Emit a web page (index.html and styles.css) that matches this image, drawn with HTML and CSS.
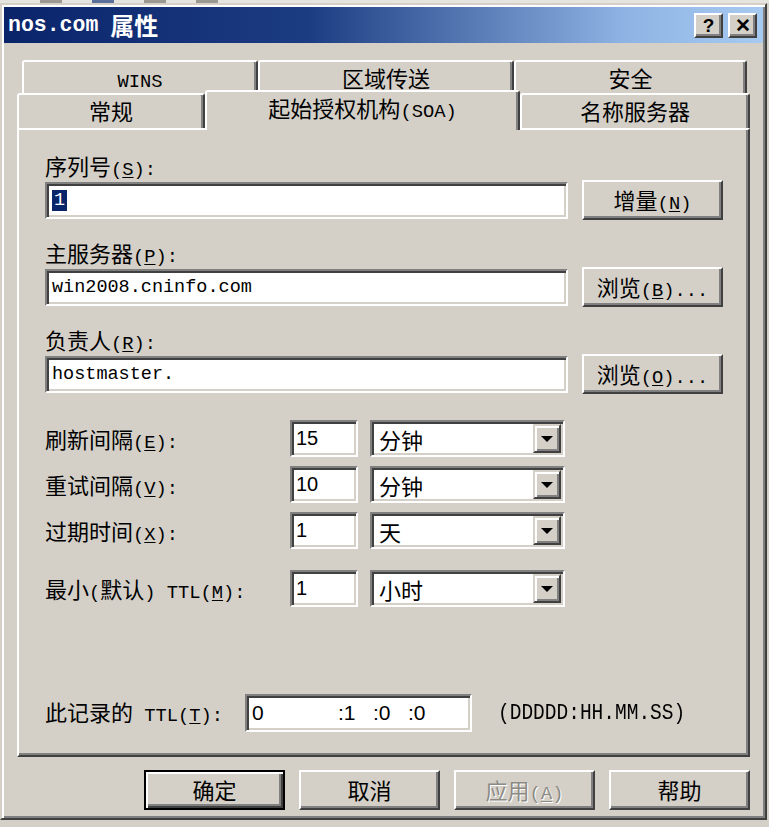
FILE: index.html
```html
<!DOCTYPE html>
<html lang="zh-CN">
<head>
  <meta charset="UTF-8" />
  <title>nos.com 属性</title>
  <link rel="stylesheet" href="styles.css">
</head>
<body>

<div class="desk-strip">
  <span class="frag"></span><span class="frag blue"></span><span class="frag"></span><span class="frag"></span>
</div>

<div class="window">
  <div class="titlebar">
    <div class="title"><span class="title-mono">nos.com</span><span class="title-cjk">属性</span></div>
    <div class="caption-btns">
      <span class="cap-btn">?</span>
      <span class="cap-btn">✕</span>
    </div>
  </div>

  <div class="tabs">
    <div class="tab-row back">
      <div class="tab w-wins"><span class="mono">WINS</span></div>
      <div class="tab w-zone">区域传送</div>
      <div class="tab w-sec">安全</div>
    </div>
    <div class="tab-row front">
      <div class="tab w-gen">常规</div>
      <div class="tab w-soa selected">起始授权机构<span class="key">(SOA)</span></div>
      <div class="tab w-ns">名称服务器</div>
    </div>
  </div>

  <div class="panel">
    <div class="field-label">序列号<span class="key">(<u>S</u>):</span></div>
    <div class="field-row">
      <div class="text-input wide"><span class="sel">1</span></div>
      <div class="btn">增量<span class="key">(<u>N</u>)</span></div>
    </div>

    <div class="field-label">主服务器<span class="key">(<u>P</u>):</span></div>
    <div class="field-row">
      <div class="text-input wide">win2008.cninfo.com</div>
      <div class="btn">浏览<span class="key">(<u>B</u>)...</span></div>
    </div>

    <div class="field-label">负责人<span class="key">(<u>R</u>):</span></div>
    <div class="field-row">
      <div class="text-input wide">hostmaster.</div>
      <div class="btn">浏览<span class="key">(<u>O</u>)...</span></div>
    </div>

    <div class="time-grid">
      <div class="time-label">刷新间隔<span class="key">(<u>E</u>):</span></div>
      <div class="text-input num">15</div>
      <div class="combo"><span class="combo-text">分钟</span><span class="combo-btn"></span></div>

      <div class="time-label">重试间隔<span class="key">(<u>V</u>):</span></div>
      <div class="text-input num">10</div>
      <div class="combo"><span class="combo-text">分钟</span><span class="combo-btn"></span></div>

      <div class="time-label">过期时间<span class="key">(<u>X</u>):</span></div>
      <div class="text-input num">1</div>
      <div class="combo"><span class="combo-text">天</span><span class="combo-btn"></span></div>

      <div class="time-label gap-top">最小<span class="key">(</span>默认<span class="key">) TTL(<u>M</u>):</span></div>
      <div class="text-input num gap-top">1</div>
      <div class="combo gap-top"><span class="combo-text">小时</span><span class="combo-btn"></span></div>
    </div>

    <div class="ttl-row">
      <div class="ttl-label">此记录的<span class="key"> TTL(<u>T</u>):</span></div>
      <div class="text-input ttl">
        <span class="ttl-days">0</span>
        <span class="ttl-part">:1</span>
        <span class="ttl-part">:0</span>
        <span class="ttl-part">:0</span>
      </div>
      <div class="ttl-format">(DDDDD:HH.MM.SS)</div>
    </div>
  </div>

  <div class="footer">
    <div class="btn default">确定</div>
    <div class="btn">取消</div>
    <div class="btn disabled">应用<span class="key">(<u>A</u>)</span></div>
    <div class="btn">帮助</div>
  </div>
</div>

</body>
</html>
```

FILE: styles.css
```css
body {
  margin: 0;
  width: 769px;
  height: 827px;
  overflow: hidden;
  background: #d4d0c8;
  font-family: "Noto Sans CJK SC", sans-serif;
  font-size: 22px;
  line-height: 30px;
  color: #000;
}

/* bits of the window behind the dialog */
.desk-strip {
  height: 3px;
  background: #e6e4de;
  display: flex;
  gap: 30px;
  padding-left: 40px;
}
.frag {
  width: 22px;
  height: 3px;
  background: #9a9890;
}
.frag.blue {
  background: #5a6f9a;
}

.window {
  width: 767px;
  box-sizing: border-box;
  border: 2px solid;
  border-color: #d4d0c8 #404040 #404040 #d4d0c8;
  box-shadow: inset 2px 2px 0 #fff, inset -2px -2px 0 #808080;
  padding: 2px 2px 8px 2px;
}

.titlebar {
  height: 36px;
  background: linear-gradient(90deg, #0a246a 0%, #1c3c82 40%, #8fb4e4 82%, #a6caf0 100%);
  display: flex;
  align-items: center;
  justify-content: space-between;
  padding: 0 6px 0 4px;
}
.title {
  color: #fff;
  font-weight: 700;
  display: flex;
  align-items: center;
}
.title-mono {
  font-family: "Liberation Mono", monospace;
  font-size: 21.5px;
  margin-right: 12px;
}
.title-cjk {
  font-size: 24px;
}
.caption-btns {
  display: flex;
  gap: 5px;
}
.cap-btn {
  width: 29px;
  height: 25px;
  box-sizing: border-box;
  background: #d4d0c8;
  border: 2px solid;
  border-color: #fff #404040 #404040 #fff;
  box-shadow: inset -2px -2px 0 #808080;
  font-family: "Liberation Sans", sans-serif;
  font-weight: 700;
  font-size: 19px;
  line-height: 21px;
  text-align: center;
}

/* tabs */
.tabs {
  margin-top: 17px;
}
.tab-row {
  display: flex;
}
.tab-row.back {
  margin-left: 18px;
  height: 33px;
}
.tab-row.front {
  margin-left: 13px;
  height: 35px;
}
.tab {
  box-sizing: border-box;
  border-top: 2px solid #fff;
  border-left: 2px solid #fff;
  border-right: 2px solid #404040;
  box-shadow: inset -2px 0 0 #808080;
  border-radius: 3px 3px 0 0;
  text-align: center;
  line-height: 30px;
  background: #d4d0c8;
}
.w-wins { width: 236px; }
.w-zone { width: 256px; }
.w-sec  { width: 233px; }
.w-gen  { width: 188px; }
.w-soa  { width: 315px; }
.w-ns   { width: 230px; }

.tab.selected {
  height: 40px;
  margin-top: -3px;
  margin-bottom: -2px;
  line-height: 30px;
  position: relative;
  z-index: 1;
}

.mono,
.key {
  font-family: "Liberation Mono", monospace;
  font-size: 18.75px;
}
.key u {
  text-underline-offset: 2px;
}

/* property page */
.panel {
  margin-left: 13px;
  width: 733px;
  height: 629px;
  box-sizing: border-box;
  border: 2px solid;
  border-color: #fff #404040 #404040 #fff;
  box-shadow: inset -2px -2px 0 #808080;
  padding: 20px 0 0 26px;
}

.field-label {
  height: 30px;
}
.field-row {
  display: flex;
  align-items: center;
  gap: 14px;
  height: 40px;
  margin-bottom: 17px;
}

.text-input {
  box-sizing: border-box;
  height: 37px;
  background: #fff;
  border: 2px solid;
  border-color: #808080 #fff #fff #808080;
  box-shadow: inset 2px 2px 0 #404040, inset -2px -2px 0 #d4d0c8;
  padding: 0 5px;
  font-family: "Liberation Mono", monospace;
  font-size: 18.5px;
  line-height: 33px;
  white-space: nowrap;
}
.text-input.wide {
  width: 523px;
}
.sel {
  background: #0a246a;
  color: #fff;
  padding: 0 2px;
}

.btn {
  box-sizing: border-box;
  width: 141px;
  height: 40px;
  background: #d4d0c8;
  border: 2px solid;
  border-color: #fff #404040 #404040 #fff;
  box-shadow: inset -2px -2px 0 #808080;
  text-align: center;
  line-height: 34px;
  white-space: nowrap;
}
.btn.default {
  border-color: #000;
  box-shadow: inset 2px 2px 0 #fff, inset -2px -2px 0 #404040, inset -4px -4px 0 #808080;
}
.btn.disabled {
  color: #8c8a84;
  text-shadow: 1px 1px 0 #fff;
}

/* refresh / retry / expire / minimum */
.time-grid {
  display: grid;
  grid-template-columns: 233px 68px 195px;
  column-gap: 12px;
  row-gap: 9px;
  margin-top: 26px;
  align-items: center;
}
.time-label {
  height: 37px;
  line-height: 37px;
  white-space: nowrap;
}
.gap-top {
  margin-top: 12px;
}
.text-input.num {
  font-family: "Liberation Sans", sans-serif;
  font-size: 20px;
  padding-left: 4px;
}
.combo {
  box-sizing: border-box;
  height: 37px;
  background: #fff;
  border: 2px solid;
  border-color: #808080 #fff #fff #808080;
  box-shadow: inset 2px 2px 0 #404040, inset -2px -2px 0 #d4d0c8;
  display: flex;
  align-items: center;
  justify-content: space-between;
  padding: 2px 2px 2px 7px;
}
.combo-text {
  line-height: 30px;
}
.combo-btn {
  width: 28px;
  height: 29px;
  box-sizing: border-box;
  background: #d4d0c8;
  border: 2px solid;
  border-color: #d4d0c8 #404040 #404040 #d4d0c8;
  box-shadow: inset 2px 2px 0 #fff, inset -2px -2px 0 #808080;
  display: flex;
  align-items: center;
  justify-content: center;
}
.combo-btn::after {
  content: "";
  border-left: 6px solid transparent;
  border-right: 6px solid transparent;
  border-top: 6px solid #000;
}

/* TTL of this record */
.ttl-row {
  display: flex;
  align-items: center;
  margin-top: 87px;
  height: 38px;
}
.ttl-label {
  width: 200px;
  white-space: nowrap;
}
.text-input.ttl {
  width: 227px;
  height: 38px;
  display: flex;
  font-family: "Liberation Sans", sans-serif;
  font-size: 21px;
}
.ttl-days {
  width: 86px;
}
.ttl-part {
  width: 35px;
}
.ttl-format {
  margin-left: 26px;
  font-family: "Liberation Mono", monospace;
  font-size: 19.5px;
  transform: scaleY(1.1);
}

.footer {
  display: flex;
  justify-content: flex-end;
  gap: 14px;
  margin: 13px 13px 0 0;
}
```
